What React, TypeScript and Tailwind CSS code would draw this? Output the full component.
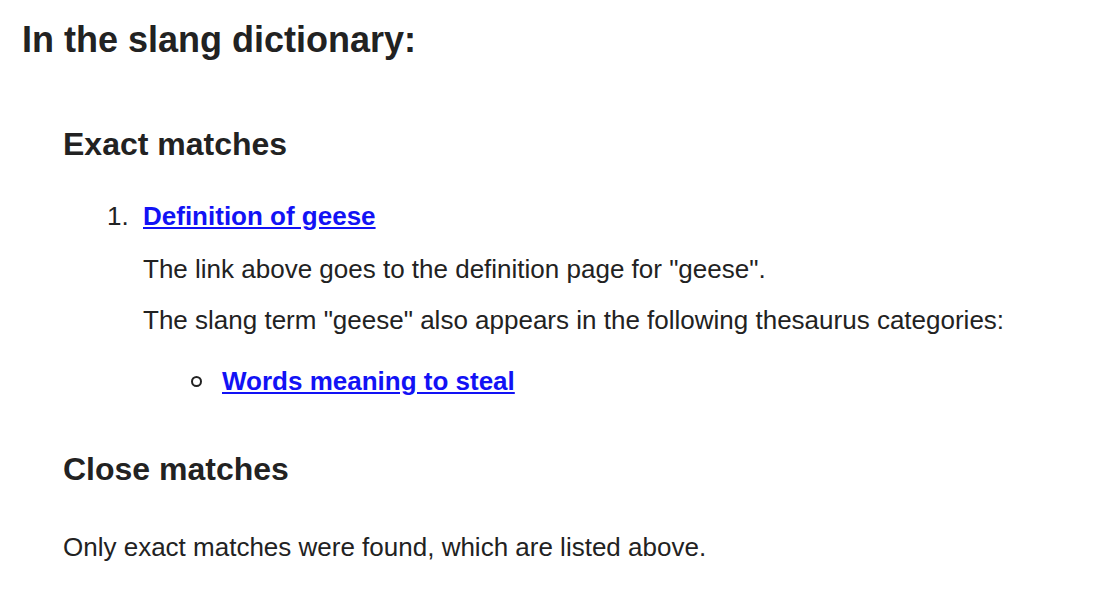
export default function App() {
  return (
    <div className="min-h-screen bg-white text-[#222] font-['Liberation_Sans',Arial,sans-serif] px-[22px] pt-[18px]">
      <h1 className="text-[36px] leading-[44px] font-bold">In the slang dictionary:</h1>

      <div className="pl-[41px]">
        <h2 className="mt-[63px] text-[32px] leading-[38px] font-bold">Exact matches</h2>

        <ol className="mt-[38px] pl-[44px] text-[26px] leading-[30px]">
          <li className="flex">
            <span className="w-[36px] shrink-0">1.</span>
            <div>
              <a href="#" className="font-bold text-[#1212f5] underline">
                Definition of geese
              </a>
              <p className="mt-[23px]">The link above goes to the definition page for "geese".</p>
              <p className="mt-[21px]">
                The slang term "geese" also appears in the following thesaurus categories:
              </p>
              <ul className="mt-[31px] pl-[48px]">
                <li className="flex items-center">
                  <span className="w-[31px] shrink-0">
                    <span className="block h-[11px] w-[11px] rounded-full border-2 border-[#222]" />
                  </span>
                  <a href="#" className="font-bold text-[#1212f5] underline">
                    Words meaning to steal
                  </a>
                </li>
              </ul>
            </div>
          </li>
        </ol>

        <h2 className="mt-[54px] text-[32px] leading-[38px] font-bold">Close matches</h2>
        <p className="mt-[44px] text-[26px] leading-[30px]">
          Only exact matches were found, which are listed above.
        </p>
      </div>
    </div>
  );
}
